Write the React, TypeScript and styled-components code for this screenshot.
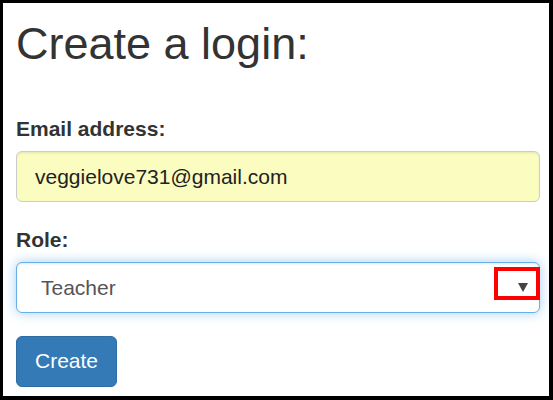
import React from "react";
import styled, { createGlobalStyle } from "styled-components";

const Global = createGlobalStyle`
  html, body { margin: 0; padding: 0; background: #000; }
  body { font-family: "Liberation Sans", Arial, Helvetica, sans-serif; color: #333; }
  * { box-sizing: border-box; }
`;

const Frame = styled.div`
  width: 553px;
  height: 400px;
  background: #fff;
  border-style: solid;
  border-color: #000;
  border-width: 3px 4px 4px 3px;
  padding: 16px 9px 0 13px;
  display: flex;
  flex-direction: column;
  overflow: hidden;
`;

const Heading = styled.h2`
  margin: 0 0 45px 0;
  font-size: 45px;
  line-height: 49.5px;
  font-weight: 500;
  color: #333;
`;

const Group = styled.div`
  display: flex;
  flex-direction: column;
  margin-bottom: 22.5px;
`;

const Label = styled.label`
  font-size: 21px;
  line-height: 30px;
  font-weight: 700;
  color: #333;
  margin-bottom: 7.5px;
`;

const Field = styled.div<{ $focused?: boolean; $autofill?: boolean }>`
  position: relative;
  display: flex;
  align-items: center;
  height: 51px;
  width: 524px;
  padding: 0 ${(p) => (p.$focused ? "24px" : "18px")};
  font-size: 21px;
  border-radius: 6px;
  border: 1.5px solid ${(p) => (p.$focused ? "#66afe9" : "#ccc")};
  background: ${(p) => (p.$autofill ? "#fafdbf" : "#fff")};
  color: ${(p) => (p.$autofill ? "#222" : "#555")};
  box-shadow: ${(p) =>
    p.$focused
      ? "inset 0 1.5px 1.5px rgba(0,0,0,.075), 0 0 12px rgba(102,175,233,.6)"
      : "inset 0 1.5px 1.5px rgba(0,0,0,.075)"};
`;

const Value = styled.span`
  flex: 1;
`;

const Arrow = styled.svg`
  width: 10px;
  height: 10px;
  margin-right: -13px;
  margin-top: -1px;
`;

const Highlight = styled.div`
  position: absolute;
  left: 477px;
  top: 4px;
  width: 46px;
  height: 33px;
  border: 4px solid #ff0000;
`;

const Button = styled.button`
  align-self: flex-start;
  height: 51px;
  padding: 0 18px;
  font-family: inherit;
  font-size: 21px;
  color: #fff;
  background: #337ab7;
  border: 1.5px solid #2e6da4;
  border-radius: 6px;
`;

export default function App() {
  return (
    <>
      <Global />
      <Frame>
        <Heading>Create a login:</Heading>
        <Group>
          <Label>Email address:</Label>
          <Field $autofill>
            <Value>veggielove731@gmail.com</Value>
          </Field>
        </Group>
        <Group>
          <Label>Role:</Label>
          <Field $focused>
            <Value>Teacher</Value>
            <Arrow viewBox="0 0 10 10">
              <path d="M0 1 L10 1 L5 10 Z" fill="#444" />
            </Arrow>
            <Highlight />
          </Field>
        </Group>
        <Button>Create</Button>
      </Frame>
    </>
  );
}
